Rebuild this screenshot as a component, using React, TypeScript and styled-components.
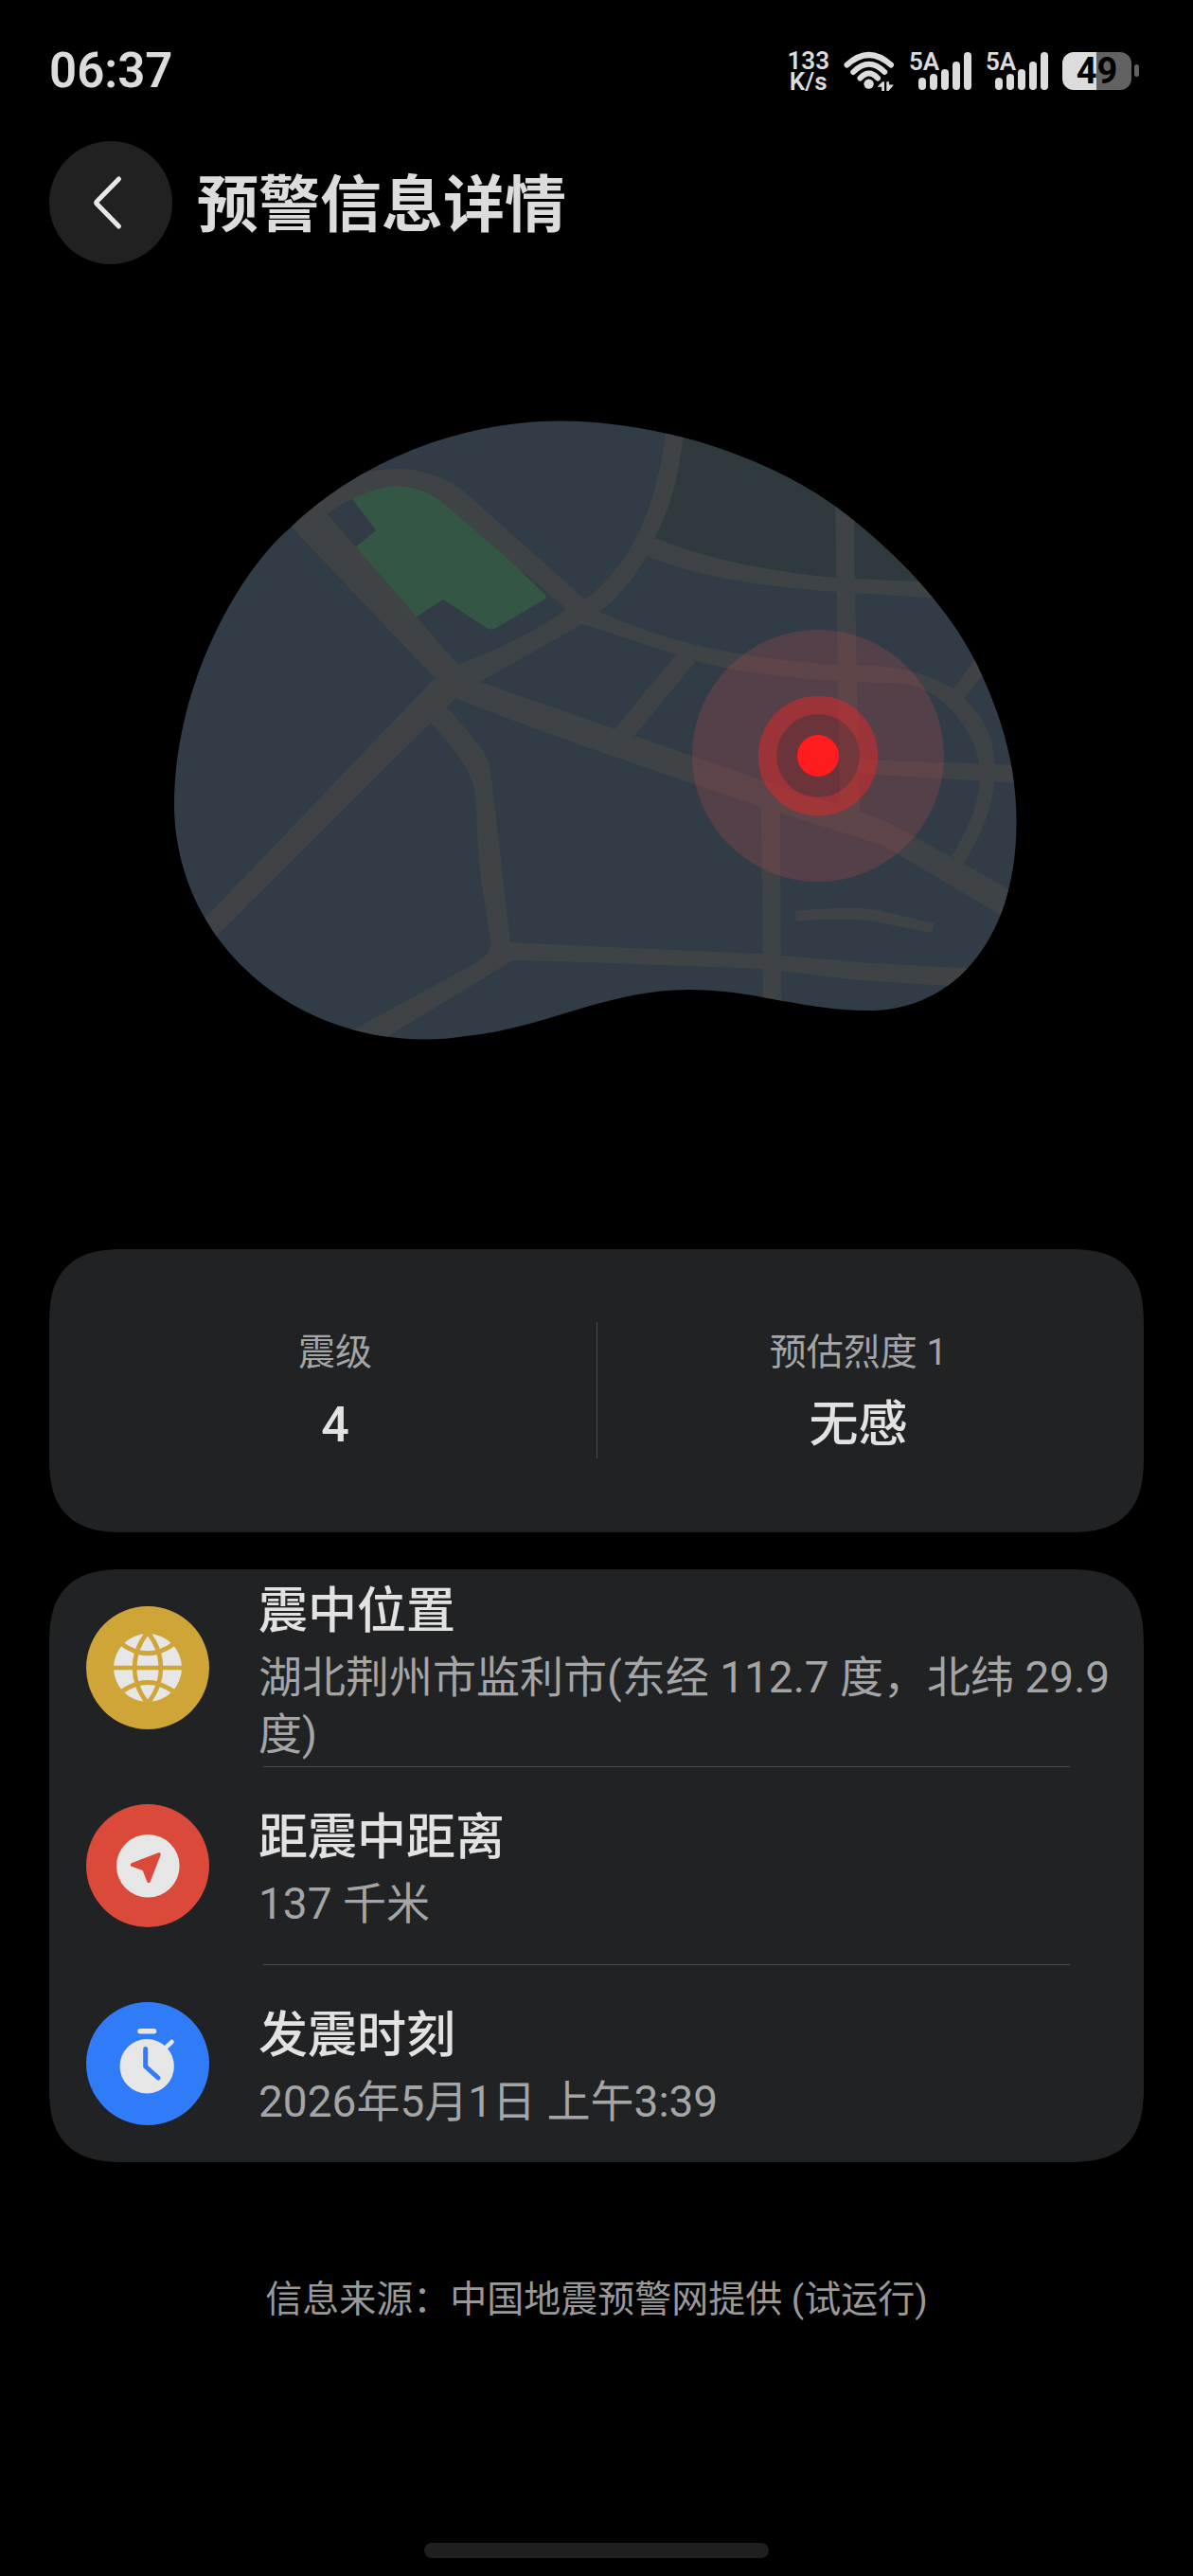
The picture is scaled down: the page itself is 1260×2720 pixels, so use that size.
import type { ReactNode } from "react";
import styled, { createGlobalStyle } from "styled-components";

const GlobalStyle = createGlobalStyle`
  * {
    box-sizing: border-box;
  }
  body {
    margin: 0;
    background: #000;
    color: #e2e2e2;
    font-family: Roboto, "Noto Sans CJK SC", sans-serif;
  }
  h1, h2, p, ul, dl, dt, dd {
    margin: 0;
    padding: 0;
    font-weight: 400;
  }
`;

const Page = styled.div`
  display: flex;
  flex-direction: column;
  min-height: 100vh;
  padding-bottom: 19px;
`;

const StatusBar = styled.div`
  display: flex;
  align-items: center;
  justify-content: space-between;
  height: 149px;
  padding: 0 57px 0 52px;
  color: #dcdcdc;
`;

const Clock = styled.time`
  font-size: 51px;
  font-weight: 600;
  line-height: 60px;
`;

const StatusIcons = styled.div`
  display: flex;
  align-items: center;
  gap: 15px;
`;

const NetSpeed = styled.div`
  display: flex;
  flex-direction: column;
  font-size: 26px;
  font-weight: 600;
  line-height: 22px;
  text-align: center;
`;

const SignalText = styled.text`
  font-size: 26px;
  font-weight: 600;
`;

const Battery = styled.div`
  display: flex;
  align-items: center;
  gap: 3px;
`;

const BatteryBody = styled.div<{ $level: number }>`
  width: 73px;
  height: 40px;
  border-radius: 12px;
  background: linear-gradient(
    to right,
    #dcdcdc ${({ $level }) => $level}%,
    #626262 ${({ $level }) => $level}%
  );
  color: #000;
  font-size: 38px;
  font-weight: 700;
  line-height: 40px;
  text-align: center;
`;

const BatteryTip = styled.div`
  width: 5px;
  height: 13px;
  border-radius: 3px;
  background: #626262;
`;

const Header = styled.header`
  display: flex;
  align-items: center;
  gap: 26px;
  padding: 0 52px;
`;

const BackButton = styled.button`
  display: flex;
  align-items: center;
  justify-content: center;
  width: 130px;
  height: 130px;
  padding: 0;
  border: 0;
  border-radius: 50%;
  background: #212121;
  color: #e8e8e8;
`;

const Title = styled.h1`
  padding-top: 6px;
  color: #dcdcdc;
  font-size: 65px;
  font-weight: 700;
  line-height: 80px;
`;

const MapSection = styled.section`
  padding: 161px 52px 219px;
  svg {
    display: block;
    width: 100%;
    max-width: 900px;
    margin: 0 auto;
  }
`;

const Card = styled.section`
  margin: 0 52px;
  border-radius: 66px;
  background: #212224;
  @supports (corner-shape: squircle) {
    border-radius: 80px;
    corner-shape: superellipse(1.4);
  }
`;

const SummaryCard = styled(Card)`
  margin-bottom: 39px;
  padding: 77px 26px 78px;
`;

const Stats = styled.dl`
  display: grid;
  grid-template-columns: 1fr 1fr;
`;

const Stat = styled.div`
  height: 144px;
  padding-top: 7px;
  text-align: center;
  & + & {
    border-left: 1px solid #48494b;
  }
  dt {
    color: #a4a5a6;
    font-size: 39px;
    line-height: 50px;
  }
  dd {
    padding-top: 17px;
    font-size: 52px;
    font-weight: 500;
    line-height: 70px;
  }
`;

const DetailList = styled.ul`
  list-style: none;
`;

const DetailRow = styled.li`
  display: grid;
  grid-template-columns: 130px 1fr;
  align-items: center;
  column-gap: 52px;
  min-height: 208px;
  padding: 0 20px 0 39px;
`;

const Divider = styled.li`
  height: 1px;
  margin: 0 78px 0 226px;
  background: #4b4c4e;
`;

const IconCircle = styled.div<{ $color: string }>`
  height: 130px;
  border-radius: 50%;
  background: ${({ $color }) => $color};
  color: ${({ $color }) => $color};
  svg {
    display: block;
  }
`;

const DetailBody = styled.div`
  padding-top: 6px;
`;

const DetailTitle = styled.h2`
  font-size: 52px;
  font-weight: 500;
  line-height: 70px;
`;

const DetailText = styled.p`
  padding-top: 4px;
  color: #a4a5a6;
  font-size: 46px;
  line-height: 60px;
`;

const Source = styled.footer`
  margin: 116px 52px 40px;
  color: #999;
  font-size: 39px;
  line-height: 58px;
  text-align: center;
`;

const HomeIndicator = styled.div`
  width: 364px;
  height: 16px;
  margin: auto auto 0;
  border-radius: 8px;
  background: #1f1f1f;
`;

const WifiIcon = () => (
  <svg width="54" height="44" viewBox="8 7 54 44" fill="none" stroke="currentColor" strokeWidth="6" strokeLinecap="round">
    <path d="M11.5 22.5Q34.7 1.5 58 22.5" />
    <path d="M18.3 30Q34.7 13.5 51.2 30" />
    <path d="M25.5 36.5Q34.7 26.5 44 36.5" />
    <circle cx="34.6" cy="42.6" r="5.2" fill="currentColor" stroke="none" />
    <path d="M43.5 45.8L49 40.2H51V50H48.2V45.8Z" fill="currentColor" stroke="none" />
    <path d="M53.3 40.2H56V43.4H61L55.5 50H53.3Z" fill="currentColor" stroke="none" />
  </svg>
);

const SignalIcon = () => (
  <svg width="66" height="54" viewBox="0 -6 66 54" fill="currentColor">
    <SignalText x="0" y="20">5A</SignalText>
    <rect x="10" y="28" width="8" height="13" rx="4" />
    <rect x="22" y="24" width="8" height="17" rx="4" />
    <rect x="34" y="19" width="8" height="22" rx="4" />
    <rect x="46" y="11" width="8" height="30" rx="4" />
    <rect x="58" y="1" width="8" height="40" rx="4" />
  </svg>
);

const BackIcon = () => (
  <svg width="60" height="60" viewBox="0 0 60 60" fill="none" stroke="currentColor" strokeWidth="5" strokeLinecap="round" strokeLinejoin="round">
    <path d="M38.5 5L15.5 28.5Q14 30 15.5 31.5L38.5 55" />
  </svg>
);

const GlobeIcon = () => (
  <svg viewBox="0 0 130 130" fill="none" stroke="currentColor" strokeWidth="4.7">
    <circle cx="65" cy="65" r="36" fill="#e6e6e6" stroke="none" />
    <path d="M28 65H102" />
    <path d="M65 27.5C46.5 50 46.5 80 65 102.5M65 27.5C83.5 50 83.5 80 65 102.5" />
    <path d="M37 39.5Q65 60 93 39.5M37 90.5Q65 70.5 93 90.5" />
  </svg>
);

const CompassIcon = () => (
  <svg viewBox="0 0 130 130">
    <circle cx="65.3" cy="65.3" r="33.3" fill="#e6e6e6" />
    <path d="M77 53L48.5 64L61 68.5L66 81.3Z" fill="currentColor" stroke="currentColor" strokeWidth="3.5" strokeLinejoin="round" />
  </svg>
);

const StopwatchIcon = () => (
  <svg viewBox="0 0 130 130" fill="none" strokeLinecap="round" strokeLinejoin="round">
    <circle cx="64.2" cy="67.7" r="28.7" fill="#e6e6e6" />
    <path d="M57 30.7H71.6" stroke="#e6e6e6" strokeWidth="5.4" />
    <path d="M82 50L90.5 42" stroke="#e6e6e6" strokeWidth="4.5" />
    <path d="M62.7 49.5V68L76 80" stroke="currentColor" strokeWidth="5" />
  </svg>
);

const EpicenterMap = () => (
  <svg viewBox="180 440 900 660" role="img" aria-label="震中位置">
    <defs>
      <clipPath id="map-outline">
        <path d="M593 444.5C685 445 800 475 884 536C950 585 1010 650 1037 713C1060 762 1074 815 1073.5 870C1073 995 1005 1068 915 1067C850 1067 795 1045 728 1045C640 1045 575 1086 492 1094C395 1110 275 1072 215 967C195 932 184 890 184 850C184 720 255 600 307 557C385 482 495 444 593 444.5Z" />
      </clipPath>
    </defs>
    <g clipPath="url(#map-outline)">
      <rect x="180" y="440" width="900" height="660" fill="#323c46" />
      {/* parks */}
      <path d="M721 440C716 500 710 530 692 568C750 592 820 604 882 610L1010 616V440Z" fill="#2e3a3d" />
      <path d="M372 527Q395 513 422 513Q448 515 467 530L525 578L576 628Q578 631 575 633L524 663Q519 666 514 663L468 633L439 652L374 579L397 560Z" fill="#345645" />
      {/* roads */}
      <g fill="#3f4346">
        <path d="M295 543L330 515L346 543L484 702L490 730L470 730L459 716Z" />
        <path d="M345 543C372 524 400 513 422 513C440 513 456 520 468 531L598 643L608 652L618 633L490 519C465 500 440 495 420 495C400 495 385 499 380 501L290 555Z" />
        <path d="M484 702C520 688 570 665 598 643L618 633C650 610 675 570 688 528C696 500 702 475 705 440L724 440C718 500 710 530 692 568L683 587C670 610 655 630 633 646L615 659L507 720Z" />
        <path d="M615 640L633 646C700 675 760 693 885 702C950 702 975 710 1007 727C1070 775 1058 850 1017 913L1005 904C1045 840 1045 790 1003 748C985 730 970 722 937 721C850 719 790 712 735 698L615 659Z" />
        <path d="M1007 727L1035 690L1048 700L1018 738Z" />
        <path d="M715 690L735 698L670 777L649 770Z" />
        <path d="M484 702L507 720L650 770L803 823L910 858L940 869L1080 947V980L933 893L823 858L730 827L620 789L540 760C520 752 500 745 482 737L459 716Z" />
        <path d="M459 716L212 974L225 992L455 763L482 737L490 720Z" />
        <path d="M455 763L472 747C492 770 514 792 518 812L539 995L620 999L805 1007L920 1017L1040 1023L1020 1042L907 1035L805 1023L620 1016L542 1014L400 1100H350L493 1022C505 1015 520 1008 518 993C512 950 505 920 504 877C503 820 500 815 455 763Z" />
        <path d="M804 845L824 850L825 1060H806Z" />
        <path d="M882 520H902L903 620L908 860L887 850Z" />
        <path d="M692 568C750 592 820 604 882 610L1010 616V633L882 625C800 618 740 610 683 587Z" />
        <path d="M905 802L1080 808V827L905 817Z" />
        <path d="M840 962C880 958 910 958 927 961L987 975L984 985L923 973C900 970 870 970 841 973Z" />
      </g>
    </g>
    {/* epicenter */}
    <circle cx="864" cy="798" r="133" fill="#ef5156" fillOpacity="0.18" />
    <circle cx="864" cy="798" r="44" fill="#c70307" fillOpacity="0.2" />
    <circle cx="864" cy="798" r="53.5" fill="none" stroke="#ff2222" strokeOpacity="0.42" strokeWidth="19.5" />
    <circle cx="864" cy="798" r="22" fill="#ff1c1f" />
  </svg>
);

interface Detail {
  title: string;
  text: string;
  color: string;
  icon: ReactNode;
}

const details: Detail[] = [
  {
    title: "震中位置",
    text: "湖北荆州市监利市(东经 112.7 度，北纬 29.9 度)",
    color: "#cea536",
    icon: <GlobeIcon />,
  },
  {
    title: "距震中距离",
    text: "137 千米",
    color: "#da493a",
    icon: <CompassIcon />,
  },
  {
    title: "发震时刻",
    text: "2026年5月1日 上午3:39",
    color: "#307bf7",
    icon: <StopwatchIcon />,
  },
];

const App = () => {
  return (
    <Page>
      <GlobalStyle />
      <StatusBar>
        <Clock>06:37</Clock>
        <StatusIcons>
          <NetSpeed>
            <span>133</span>
            <span>K/s</span>
          </NetSpeed>
          <WifiIcon />
          <SignalIcon />
          <SignalIcon />
          <Battery>
            <BatteryBody $level={49}>49</BatteryBody>
            <BatteryTip />
          </Battery>
        </StatusIcons>
      </StatusBar>
      <Header>
        <BackButton type="button" aria-label="返回">
          <BackIcon />
        </BackButton>
        <Title>预警信息详情</Title>
      </Header>
      <main>
        <MapSection>
          <EpicenterMap />
        </MapSection>
        <SummaryCard>
          <Stats>
            <Stat>
              <dt>震级</dt>
              <dd>4</dd>
            </Stat>
            <Stat>
              <dt>预估烈度 1</dt>
              <dd>无感</dd>
            </Stat>
          </Stats>
        </SummaryCard>
        <Card>
          <DetailList>
            {details.map(({ title, text, color, icon }, index) => [
              index > 0 && <Divider key={`${title}-divider`} role="separator" />,
              <DetailRow key={title}>
                <IconCircle $color={color}>{icon}</IconCircle>
                <DetailBody>
                  <DetailTitle>{title}</DetailTitle>
                  <DetailText>{text}</DetailText>
                </DetailBody>
              </DetailRow>,
            ])}
          </DetailList>
        </Card>
      </main>
      <Source>信息来源：中国地震预警网提供 (试运行)</Source>
      <HomeIndicator />
    </Page>
  );
};

export default App;
